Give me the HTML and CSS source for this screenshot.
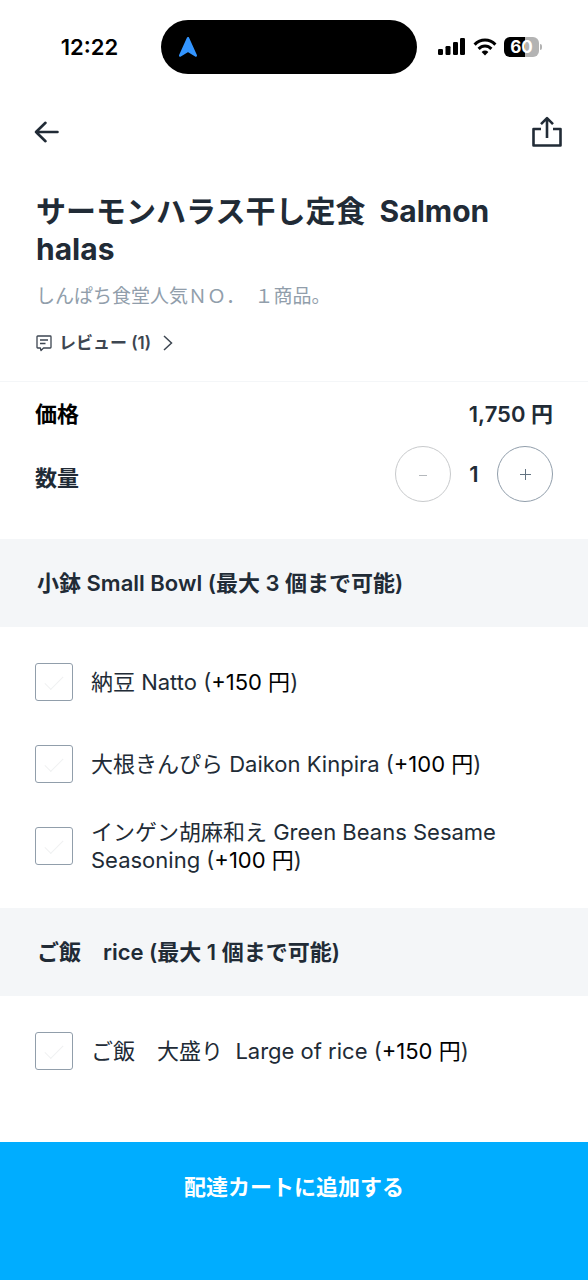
FILE: index.html
```html
<!DOCTYPE html>
<html lang="ja">
<head>
<meta charset="utf-8">
<meta name="viewport" content="width=device-width, initial-scale=1">
<title>サーモンハラス干し定食 Salmon halas</title>
<link rel="stylesheet" href="styles.css">
</head>
<body>
<div class="page">
  <div class="status-bar">
    <time class="clock">12:22</time>
    <div class="island">
      <svg width="20" height="22" viewBox="0 0 20 22" aria-hidden="true"><path d="M10 2.200 17.800 19.600 10 14.800 2.200 19.600Z" fill="#3395ff" stroke="#3395ff" stroke-width="2.400" stroke-linejoin="round"/></svg>
    </div>
    <div class="indicators">
      <svg width="28" height="18" viewBox="0 0 28 18" aria-hidden="true"><rect x="0" y="11" width="5" height="6" rx="1.2"/><rect x="7.5" y="8" width="5" height="9" rx="1.2"/><rect x="15" y="4" width="5" height="13" rx="1.2"/><rect x="22" y="0" width="5" height="17" rx="1.2"/></svg>
      <svg width="24" height="18" viewBox="0 0 24 18" aria-hidden="true"><g fill="none" stroke="#000" stroke-width="3"><path d="M1.6 6.6Q6 2 12 2T22.400 6.600"/><path d="M5.600 10.900Q8.400 8 12 8T18.400 10.900"/></g><path d="M8.600 13.900Q12 11.200 15.400 13.900L12 17.400Z"/></svg>
      <div class="battery"><span class="battery-body">60</span><span class="battery-tip"></span></div>
    </div>
  </div>

  <header class="toolbar">
    <button class="icon-button" type="button" aria-label="戻る">
      <svg width="26" height="24" viewBox="0 0 26 24" fill="none" stroke="#212b36" stroke-width="2.6" stroke-linecap="round" stroke-linejoin="round" aria-hidden="true"><path d="M23.500 12H2M11.500 2.800 2 12l9.500 9.200"/></svg>
    </button>
    <button class="icon-button" type="button" aria-label="共有">
      <svg width="32" height="32" viewBox="0 0 32 32" fill="none" stroke="#212b36" stroke-width="2.600" stroke-linejoin="round" aria-hidden="true"><path d="M10 13H2.500v16.500h27V13H22"/><path d="M16 22V2.500M10 8.200 16 2.200l6 6"/></svg>
    </button>
  </header>

  <main class="content">
    <section class="product">
      <h1 class="title">サーモンハラス干し定食&nbsp; Salmon halas</h1>
      <p class="description">しんぱち食堂人気ＮＯ．&ensp;１商品。</p>
      <a class="reviews" href="#reviews">
        <svg width="16" height="17" viewBox="0 0 16 17" fill="none" stroke="#3d4651" stroke-width="1.300" stroke-linejoin="round" aria-hidden="true"><path d="M1.700 1h12.600q.7 0 .7.700v10.600q0 .7-.7.700H7.500L5 15.600 4.400 13H1.700q-.7 0-.7-.7V1.700q0-.7.7-.7Z"/><path d="M4 5h8M4 8.500h5.500"/></svg>
        <span>レビュー (1)</span>
        <svg class="chevron" width="10" height="16" viewBox="0 0 10 16" fill="none" stroke="#3d4651" stroke-width="1.500" aria-hidden="true"><path d="m1 1 7.500 7L1 15"/></svg>
      </a>
    </section>

    <section class="order">
      <div class="row price-row"><span class="price-label">価格</span><span class="price">1,750 円</span></div>
      <div class="row quantity-row">
        <span class="quantity-label">数量</span>
        <div class="stepper">
          <button class="step" type="button" aria-label="減らす" disabled><svg width="12" height="12" viewBox="0 0 12 12" aria-hidden="true"><path d="M2 7.500h8" stroke="currentColor"/></svg></button>
          <output class="quantity">1</output>
          <button class="step" type="button" aria-label="増やす"><svg width="12" height="12" viewBox="0 0 12 12" aria-hidden="true"><path d="M1 6.500h11M6.500 1v11" stroke="currentColor"/></svg></button>
        </div>
      </div>
    </section>

    <section>
      <h2 class="group-title">小鉢 Small Bowl (最大 3 個まで可能)</h2>
      <div class="options">
        <label class="option"><input class="check" type="checkbox"><span>納豆 Natto (<span class="extra">+150 円</span>)</span></label>
        <label class="option"><input class="check" type="checkbox"><span>大根きんぴら Daikon Kinpira (<span class="extra">+100 円</span>)</span></label>
        <label class="option"><input class="check" type="checkbox"><span>インゲン胡麻和え Green Beans Sesame Seasoning (<span class="extra">+100 円</span>)</span></label>
      </div>
    </section>

    <section>
      <h2 class="group-title">ご飯　rice (最大 1 個まで可能)</h2>
      <div class="options">
        <label class="option"><input class="check" type="checkbox"><span>ご飯　大盛り&nbsp; Large of rice (<span class="extra">+150 円</span>)</span></label>
      </div>
    </section>
  </main>

  <button class="add-to-cart" type="button">配達カートに追加する</button>
</div>
</body>
</html>
```
FILE: styles.css
```css
* { box-sizing: border-box; }

body {
  margin: 0;
  background: #fff;
  color: #212b36;
  font-family: Inter, "Noto Sans CJK JP", sans-serif;
  font-size: 22px;
  line-height: 28px;
}

button {
  padding: 0;
  border: 0;
  background: none;
  color: inherit;
  font: inherit;
}

svg { display: block; flex: none; }

.page {
  display: flex;
  flex-direction: column;
  min-height: 100vh;
}

.status-bar {
  display: grid;
  grid-template-columns: 1fr 256px 1fr;
  align-items: center;
  height: 94px;
  padding-right: 10px;
  color: #000;
}

.clock {
  padding-left: 18px;
  font-weight: 600;
  text-align: center;
}

.island {
  display: flex;
  align-items: center;
  height: 54px;
  padding-left: 17px;
  border-radius: 27px;
  background: #000;
}

.indicators {
  display: flex;
  align-items: center;
  gap: 7px;
  padding-left: 21px;
}

.battery { display: flex; align-items: center; gap: 1px; }

.battery-body {
  width: 35px;
  height: 20px;
  border-radius: 6px;
  background: linear-gradient(90deg, #000 60%, #b3b3b3 60%);
  color: #fff;
  font-size: 17px;
  font-weight: 700;
  line-height: 20px;
  text-align: center;
}

.battery-tip {
  width: 2px;
  height: 6px;
  border-radius: 0 2px 2px 0;
  background: #b3b3b3;
}

.toolbar {
  display: flex;
  align-items: center;
  justify-content: space-between;
  height: 76px;
  padding: 0 25px 0 34px;
}

.content { flex: 1; }

.product {
  padding: 22px 36px 24px;
  border-bottom: 1px solid #f4f6f8;
}

.title {
  margin: 0 0 15px;
  font-size: 30px;
  font-weight: 700;
  line-height: 38px;
}

.description {
  margin: 0 0 18px;
  color: #919eab;
  font-size: 19px;
  font-weight: 400;
}

.reviews {
  display: flex;
  align-items: center;
  gap: 7px;
  color: #3d4651;
  font-size: 17px;
  font-weight: 600;
  text-decoration: none;
}

.chevron { margin-left: 5px; }

.order {
  padding: 18px 35px 37px;
  font-weight: 600;
}

.row {
  display: flex;
  align-items: center;
  justify-content: space-between;
}

.price-row { margin-bottom: 18px; }

.price-label { color: #000; }

.quantity-label { padding-top: 8px; }

.stepper { display: flex; align-items: center; }

.step {
  display: grid;
  place-items: center;
  width: 56px;
  height: 56px;
  border: 1px solid #919eab;
  border-radius: 50%;
  color: #637381;
}

.step:disabled {
  border-color: #c8cacc;
  color: #b4b8bc;
}

.quantity {
  width: 46px;
  text-align: center;
}

.group-title {
  margin: 0;
  padding: 30px 37px;
  background: #f4f6f8;
  font-size: 22px;
  font-weight: 600;
}

.options { padding: 14px 35px 21px; }

.option {
  display: flex;
  align-items: center;
  gap: 18px;
  min-height: 82px;
}

.check {
  appearance: none;
  display: grid;
  place-items: center;
  flex: none;
  width: 38px;
  height: 38px;
  margin: 0;
  border: 1px solid #919eab;
  border-radius: 3px;
}

.check::before {
  content: "";
  width: 17px;
  height: 8px;
  border: solid #f0f1f2;
  border-width: 0 0 1px 1px;
  transform: translateY(-2px) rotate(-45deg);
}

.check:checked::before { border-color: #00adff; }

.extra { color: #000; }

.add-to-cart {
  height: 138px;
  padding-bottom: 48px;
  background: #00adff;
  color: #fff;
  font-weight: 600;
}
```
